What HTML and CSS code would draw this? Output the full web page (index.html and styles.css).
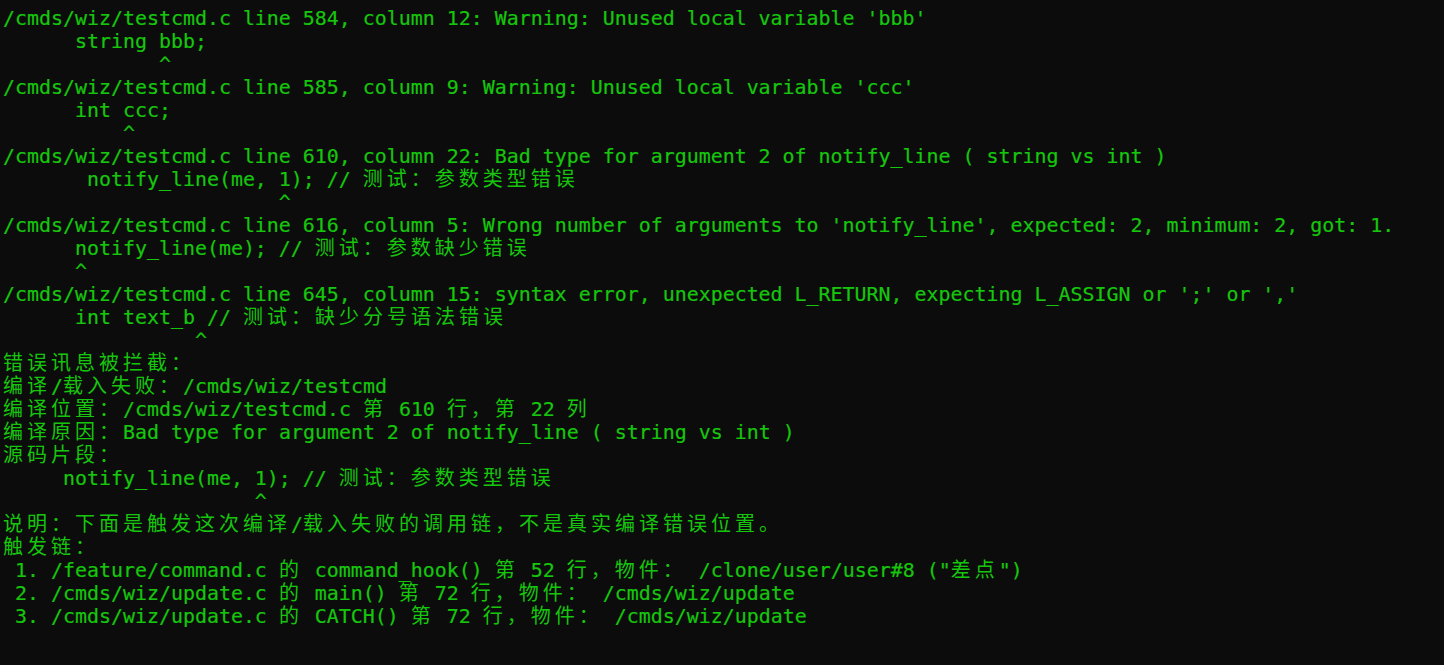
FILE: index.html
```html
<!DOCTYPE html>
<html lang="zh-CN">
<head>
<meta charset="utf-8">
<title>Terminal</title>
<link rel="stylesheet" href="styles.css">
</head>
<body>
<main class="term">
<div class="l">/cmds/wiz/testcmd.c line 584, column 12: Warning: Unused local variable 'bbb'</div>
<div class="l">      string bbb;</div>
<div class="l">             ^</div>
<div class="l">/cmds/wiz/testcmd.c line 585, column 9: Warning: Unused local variable 'ccc'</div>
<div class="l">      int ccc;</div>
<div class="l">          ^</div>
<div class="l">/cmds/wiz/testcmd.c line 610, column 22: Bad type for argument 2 of notify_line ( string vs int )</div>
<div class="l">       notify_line(me, 1); // <span class="c">测试：参数类型错误</span></div>
<div class="l">                       ^</div>
<div class="l">/cmds/wiz/testcmd.c line 616, column 5: Wrong number of arguments to 'notify_line', expected: 2, minimum: 2, got: 1.</div>
<div class="l">      notify_line(me); // <span class="c">测试：参数缺少错误</span></div>
<div class="l">      ^</div>
<div class="l">/cmds/wiz/testcmd.c line 645, column 15: syntax error, unexpected L_RETURN, expecting L_ASSIGN or ';' or ','</div>
<div class="l">      int text_b // <span class="c">测试：缺少分号语法错误</span></div>
<div class="l">                ^</div>
<div class="l"><span class="c">错误讯息被拦截：</span></div>
<div class="l"><span class="c">编译</span>/<span class="c">载入失败：</span>/cmds/wiz/testcmd</div>
<div class="l"><span class="c">编译位置：</span>/cmds/wiz/testcmd.c <span class="c">第</span> 610 <span class="c">行，第</span> 22 <span class="c">列</span></div>
<div class="l"><span class="c">编译原因：</span>Bad type for argument 2 of notify_line ( string vs int )</div>
<div class="l"><span class="c">源码片段：</span></div>
<div class="l">     notify_line(me, 1); // <span class="c">测试：参数类型错误</span></div>
<div class="l">                     ^</div>
<div class="l"><span class="c">说明：下面是触发这次编译</span>/<span class="c">载入失败的调用链，不是真实编译错误位置。</span></div>
<div class="l"><span class="c">触发链：</span></div>
<div class="l"> 1. /feature/command.c <span class="c">的</span> command_hook() <span class="c">第</span> 52 <span class="c">行，物件：</span> /clone/user/user#8 ("<span class="c">差点</span>")</div>
<div class="l"> 2. /cmds/wiz/update.c <span class="c">的</span> main() <span class="c">第</span> 72 <span class="c">行，物件：</span> /cmds/wiz/update</div>
<div class="l"> 3. /cmds/wiz/update.c <span class="c">的</span> CATCH() <span class="c">第</span> 72 <span class="c">行，物件：</span> /cmds/wiz/update</div>
</main>
</body>
</html>
```
FILE: styles.css
```css
html, body {
  margin: 0;
  padding: 0;
  background: #0c0c0c;
  height: 100%;
}
.term {
  padding: 7px 0 0 3px;
  color: #16c60c;
  font-family: "DejaVu Sans Mono", "Liberation Mono", monospace;
  font-size: 19.93px;
  line-height: 23px;
  -webkit-text-stroke: 0.2px currentColor;
}
.l {
  height: 23px;
  white-space: pre;
}
.c {
  font-family: "Noto Sans CJK SC", sans-serif;
  font-size: 20px;
  letter-spacing: 4px;
  line-height: 1px;
  -webkit-text-stroke: 0;
}
```
